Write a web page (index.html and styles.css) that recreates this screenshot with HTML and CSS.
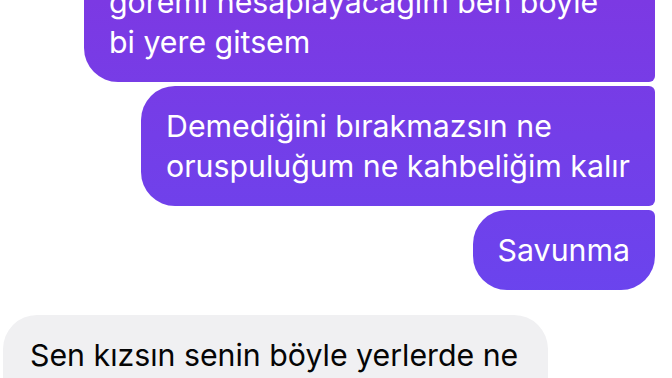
FILE: index.html
```html
<!DOCTYPE html>
<html lang="tr">
<head>
    <meta charset="UTF-8">
    <meta name="viewport" content="width=device-width, initial-scale=1.0">
    <title>Sohbet</title>
    <link rel="stylesheet" href="styles.css">
</head>
<body>
    <div class="chat">
        <div class="msg out first wide">göremi hesaplayacağım ben böyle<br>bi yere gitsem</div>
        <div class="msg out middle">Demediğini bırakmazsın ne<br>oruspuluğum ne kahbeliğim kalır</div>
        <div class="msg out last">Savunma</div>

        <div class="msg in">Sen kızsın senin böyle yerlerde ne</div>
    </div>
</body>
</html>
```

FILE: styles.css
```css
body {
    margin: 0;
    background: #fff;
    font-family: Inter, "Noto Sans", sans-serif;
    overflow: hidden;
}
.chat {
    display: flex;
    flex-direction: column;
    gap: 4px;
    padding: 0 17px 0 3px;
    margin-top: -38px;
}
.msg {
    font-size: 30.3px;
    line-height: 40px;
    padding: 20px 25px;
    border-radius: 34px;
    white-space: nowrap;
}
.out {
    align-self: flex-end;
    color: #fff;
    background: linear-gradient(180deg, #7c39e3 0px, #6a44ee 300px, #6449f2 378px) fixed;
}
.first {
    border-radius: 34px 6px 6px 34px;
}
.middle {
    border-radius: 34px 6px 6px 34px;
}
.last {
    border-radius: 34px 6px 34px 34px;
}
.wide {
    width: 521px;
}
.in {
    align-self: flex-start;
    margin-top: 21px;
    color: #050505;
    background: #f0f0f2;
    width: 487px;
    padding: 20px 31px 40px 27px;
}
```
